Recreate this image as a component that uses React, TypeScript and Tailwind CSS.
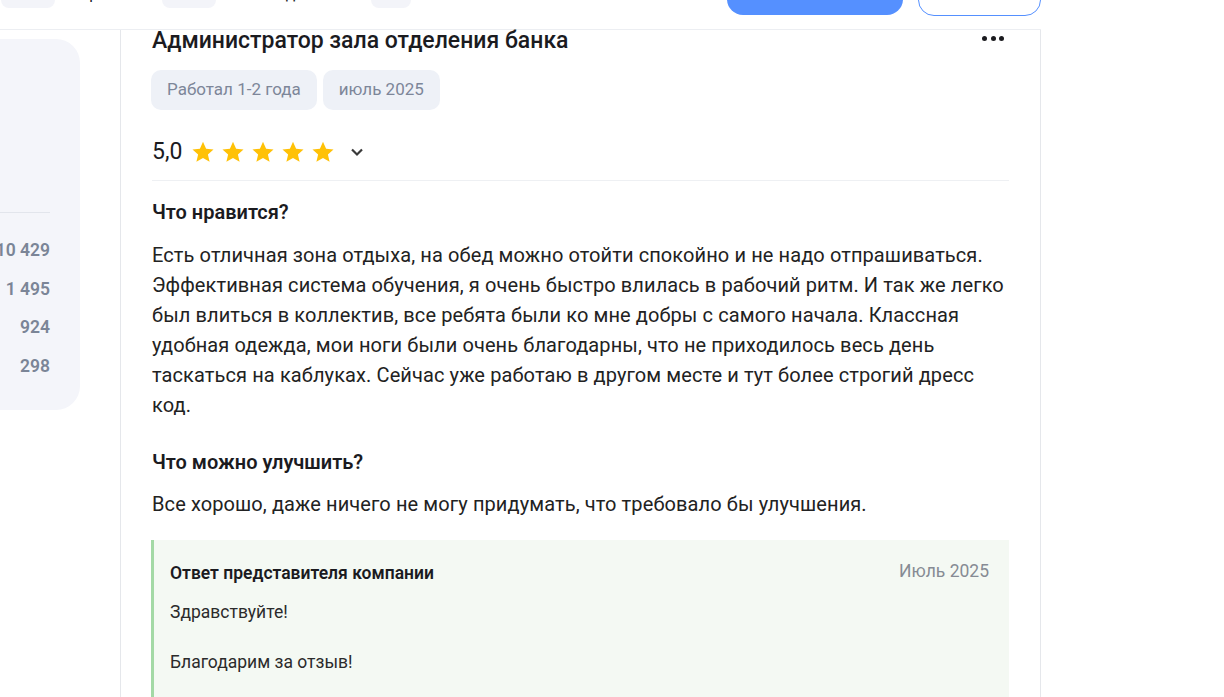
import React from 'react';

const stats = ['10 429', '1 495', '924', '298'];

function Star() {
  return (
    <svg width="24" height="24" viewBox="0 0 24 24" className="shrink-0">
      <path
        d="M12 1.8l3.1 6.9 7.4.7-5.6 5 1.7 7.4L12 17.9l-6.6 3.9 1.7-7.4-5.6-5 7.4-.7z"
        fill="#ffc107"
      />
    </svg>
  );
}

export default function App() {
  return (
    <div
      className="w-[1224px] h-[697px] overflow-hidden bg-white text-[#1b1b1f]"
      style={{ fontFamily: 'Roboto, "Noto Sans", Arial, sans-serif' }}
    >
      {/* header, only its lower edge is visible */}
      <div className="w-[1041px] h-[30px] border-b border-[#eceef2] overflow-hidden flex items-start">
        <div className="ml-[1px] -mt-[26px] w-[54px] h-[34px] rounded-lg bg-[#f3f4f9]" />
        <div className="w-[107px] pl-[16px] -mt-[16px] text-[16px] leading-[20px] text-[#1b1b1f] whitespace-nowrap">Зарплаты</div>
        <div className="-mt-[26px] w-[54px] h-[34px] rounded-lg bg-[#f3f4f9]" />
        <div className="w-[155px] pl-[16px] -mt-[16px] text-[16px] leading-[20px] text-[#1b1b1f] whitespace-nowrap overflow-hidden">Собеседования</div>
        <div className="-mt-[26px] w-[40px] h-[34px] rounded-lg bg-[#f3f4f9]" />
        <div className="ml-auto -mt-[29px] w-[176px] h-[44px] rounded-2xl bg-[#5590ff]" />
        <div className="ml-[15px] -mt-[29px] w-[123px] h-[45px] rounded-2xl border border-[#5590ff]" />
      </div>

      <div className="flex items-start">
        {/* left side panel */}
        <div className="-ml-[220px] mt-[9px] w-[300px] h-[371px] rounded-3xl bg-[#f4f5fa] pr-[30px] flex flex-col">
          <div className="mt-[173px] border-t border-[#e2e5ec]" />
          <div className="mt-[25px] flex flex-col gap-[14.5px]">
            {stats.map((s) => (
              <div key={s} className="text-right text-[17.5px] leading-[24px] font-semibold text-[#7b8597]">
                {s}
              </div>
            ))}
          </div>
        </div>

        {/* review card */}
        <div className="ml-[40px] w-[921px] h-[667px] border-x border-[#e5e7eb] pl-[31px] pr-[31px]">
          <div className="flex items-start justify-between">
            <h2 className="text-[23px] leading-[22px] font-medium text-[#1b1b1f]">
              Администратор зала отделения банка
            </h2>
            <div className="flex gap-[3.5px] pr-[5px] pt-[6px]">
              <span className="w-[5px] h-[5px] rounded-full bg-[#1b1b1f]" />
              <span className="w-[5px] h-[5px] rounded-full bg-[#1b1b1f]" />
              <span className="w-[5px] h-[5px] rounded-full bg-[#1b1b1f]" />
            </div>
          </div>

          <div className="mt-[18px] flex gap-[6px] -ml-[1px]">
            <span className="h-[40px] px-4 flex items-center rounded-[10px] bg-[#eef1f7] text-[17px] text-[#7d8699]">
              Работал 1-2 года
            </span>
            <span className="h-[40px] px-4 flex items-center rounded-[10px] bg-[#eef1f7] text-[17px] text-[#7d8699]">
              июль 2025
            </span>
          </div>

          <div className="mt-[28px] h-[28px] flex items-center">
            <span className="text-[23px] leading-[28px] text-[#1b1b1f]">5,0</span>
            <div className="ml-[9px] flex gap-[6px]">
              <Star />
              <Star />
              <Star />
              <Star />
              <Star />
            </div>
            <svg width="16" height="16" viewBox="0 0 16 16" className="ml-[14px]">
              <path d="M3 5.5l5 5 5-5" fill="none" stroke="#3a3a3a" strokeWidth="2.2" />
            </svg>
          </div>

          <div className="mt-[14px] border-t border-[#eef0f3]" />

          <h3 className="mt-[19px] text-[20px] leading-[24px] font-semibold">Что нравится?</h3>
          <p className="mt-4 -mr-[4px] text-[20px] leading-[30px] tracking-[0.1px] text-[#222]">
            Есть отличная зона отдыха, на обед можно отойти спокойно и не надо отпрашиваться.
            Эффективная система обучения, я очень быстро влилась в рабочий ритм. И так же легко
            был влиться в коллектив, все ребята были ко мне добры с самого начала. Классная
            удобная одежда, мои ноги были очень благодарны, что не приходилось весь день
            таскаться на каблуках. Сейчас уже работаю в другом месте и тут более строгий дресс
            код.
          </p>

          <h3 className="mt-[30px] text-[20px] leading-[24px] font-semibold">Что можно улучшить?</h3>
          <p className="mt-[15px] text-[20px] leading-[30px] tracking-[0.1px] text-[#222]">
            Все хорошо, даже ничего не могу придумать, что требовало бы улучшения.
          </p>

          <div className="mt-[21px] -ml-[1px] border-l-[3px] border-[#a3d9a5] bg-[#f4f9f3] pl-[16px] pr-5 pt-[21px] pb-6">
            <div className="flex items-start justify-between">
              <span className="text-[17.5px] leading-[24px] font-semibold text-[#1b1b1f]">
                Ответ представителя компании
              </span>
              <span className="text-[17.5px] leading-[20px] text-[#868b94]">Июль 2025</span>
            </div>
            <p className="mt-[15px] text-[17.5px] leading-[24px] text-[#2b2b2b]">Здравствуйте!</p>
            <p className="mt-[26px] text-[17.5px] leading-[24px] text-[#2b2b2b]">Благодарим за отзыв!</p>
          </div>
        </div>
      </div>
    </div>
  );
}
